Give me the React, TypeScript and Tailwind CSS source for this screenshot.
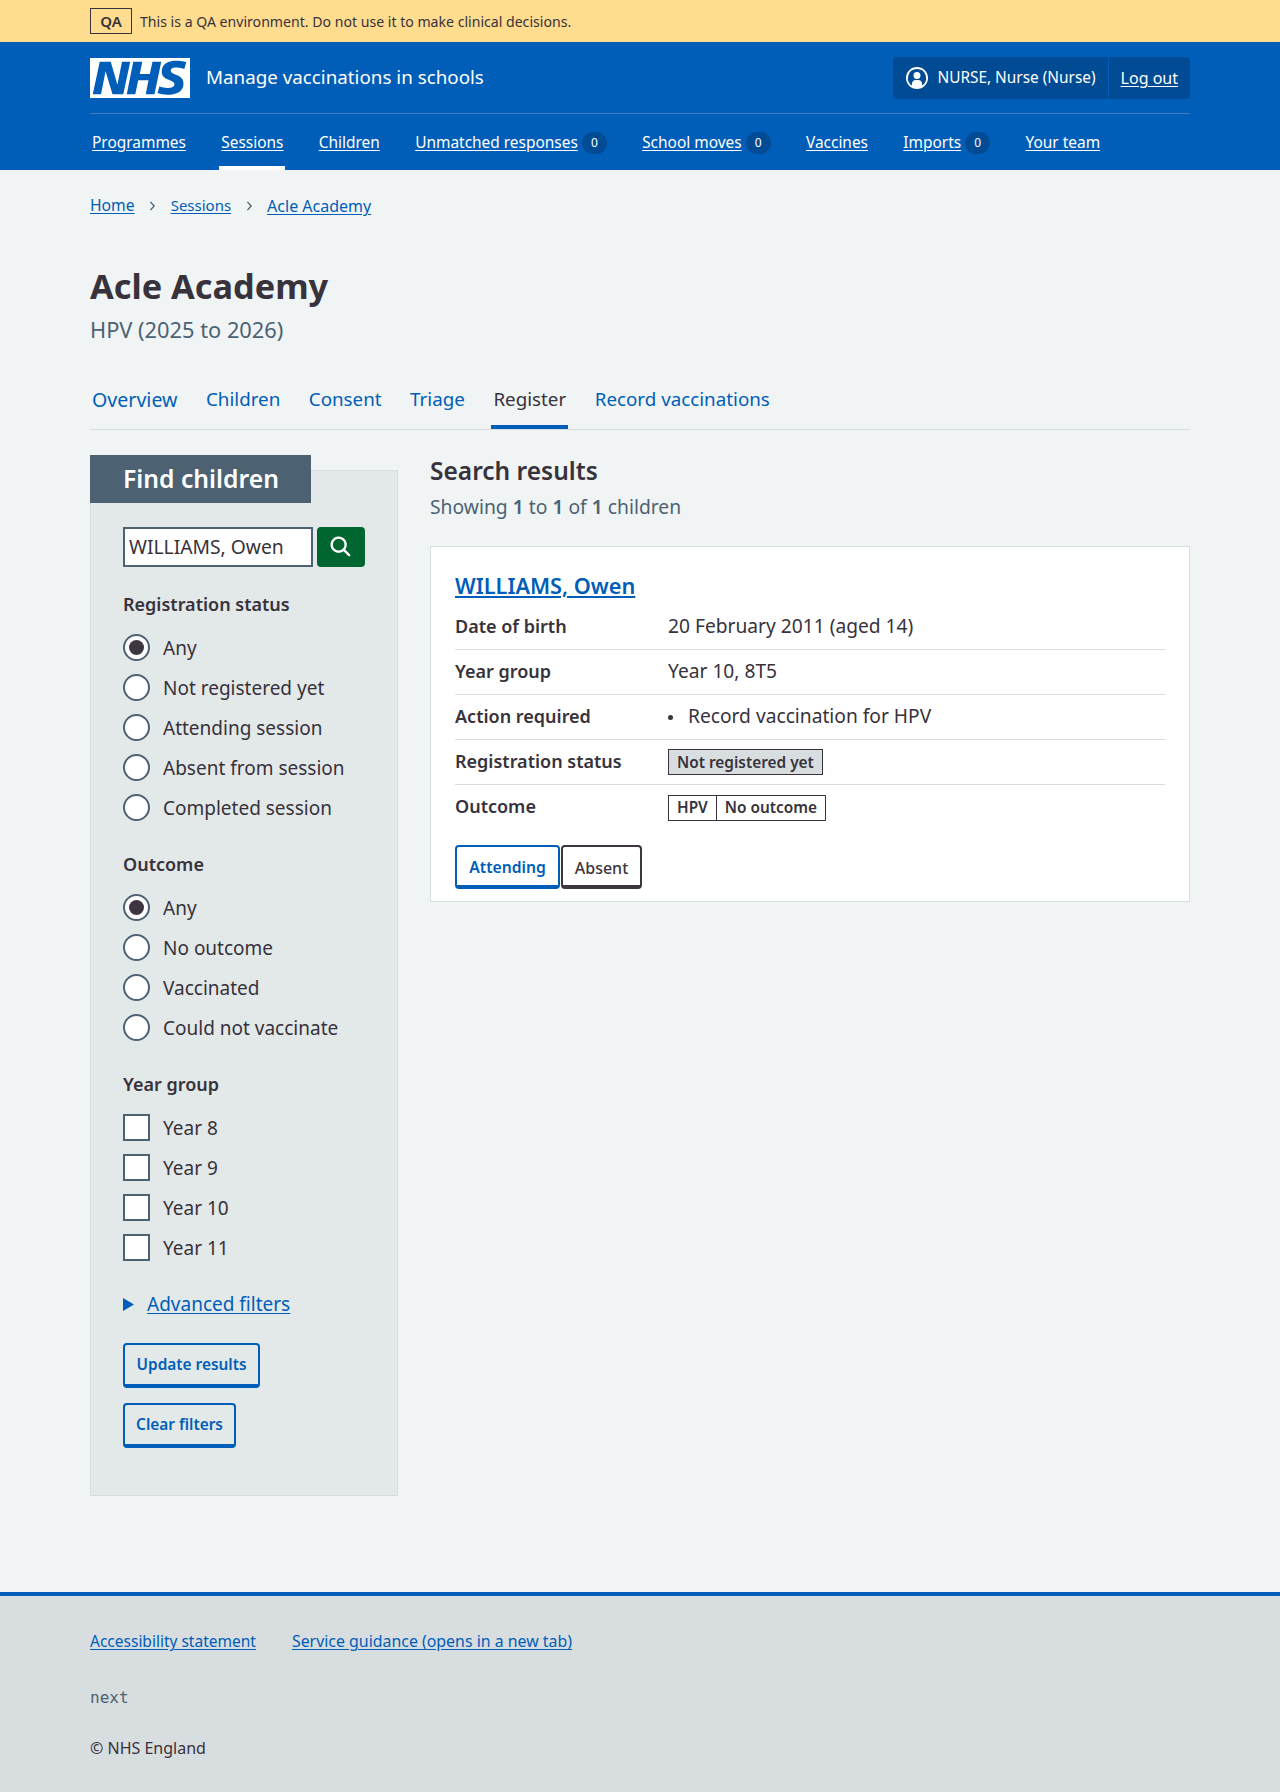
const FONT = "font-['Noto_Sans',sans-serif]";

function NhsLogo() {
  return (
    <svg viewBox="0 0 40 16" className="h-10 w-[100px]" aria-label="NHS">
      <path fill="#fff" d="M0 0h40v16H0z" />
      <path
        fill="#005eb8"
        d="M3.9 1.5h4.4l2.6 9h.1l1.8-9h3.3l-2.8 13H9l-2.7-9h-.1l-1.8 9H1.1M17.3 1.5h3.6l-1 4.9h4L25 1.5h3.5l-2.7 13h-3.5l1.1-5.6h-4.1l-1.2 5.6h-3.4M37.7 4.4c-.7-.3-1.6-.6-2.9-.6-1.4 0-2.5.2-2.5 1.3 0 1.8 5.1 1.2 5.1 5.1 0 3.6-3.3 4.5-6.4 4.5-1.3 0-2.9-.3-4-.7l.8-2.7c.7.4 2.1.7 3.2.7s2.8-.2 2.8-1.5c0-2.1-5.1-1.3-5.1-5 0-3.4 2.9-4.4 5.8-4.4 1.6 0 3.1.2 4 .6"
      />
    </svg>
  );
}

function NavLink({ label, count, active }: { label: string; count?: number; active?: boolean }) {
  return (
    <a
      className={`flex h-[56px] items-center gap-1 border-t-4 border-b-4 border-t-transparent px-0.5 pt-[1px] text-[15.45px] ${
        active ? "border-b-white" : "border-b-transparent"
      }`}
    >
      <span className="underline underline-offset-2">{label}</span>
      {count !== undefined && (
        <span className="flex h-[22px] w-[25px] items-center justify-center rounded-full bg-[#004b93] text-[12px]">
          {count}
        </span>
      )}
    </a>
  );
}

function Radio({ label, checked }: { label: string; checked?: boolean }) {
  return (
    <label className="flex h-10 items-center gap-[13px]">
      <span className="mb-[2px] flex h-[27px] w-[27px] items-center justify-center rounded-full border-2 border-[#4c6272] bg-white">
        {checked && <span className="h-[15px] w-[15px] rounded-full bg-[#3d3540]" />}
      </span>
      <span className="pt-[1px] text-[19px]">{label}</span>
    </label>
  );
}

function Checkbox({ label }: { label: string }) {
  return (
    <label className="flex h-10 items-center gap-[13px]">
      <span className="mb-[2px] h-[27px] w-[27px] border-2 border-[#4c6272] bg-white" />
      <span className="pt-[1px] text-[19px]">{label}</span>
    </label>
  );
}

function SecondaryButton({ label, width }: { label: string; width: string }) {
  return (
    <button className={`block h-[45px] rounded border-2 border-b-4 border-[#005eb8] text-[15.4px] font-semibold text-[#005eb8] ${width}`}>
      {label}
    </button>
  );
}

function Chevron() {
  return (
    <svg viewBox="0 0 8 12" className="h-[10px] w-[7px]" fill="none" stroke="#4c6272" strokeWidth="1.6">
      <path d="M1.5 1l4.5 5-4.5 5" />
    </svg>
  );
}

function Row({ term, children, last }: { term: string; children: React.ReactNode; last?: boolean }) {
  return (
    <div className={`flex h-[45px] items-center pb-[2px] ${last ? "" : "border-b border-[#d8dde0]"}`}>
      <dt className="w-[213px] text-[18px] font-semibold">{term}</dt>
      <dd className="text-[19.2px]">{children}</dd>
    </div>
  );
}

export default function App() {
  return (
    <div className={`${FONT} flex min-h-[1792px] flex-col bg-[#f0f4f5] text-[#37323b]`}>
      <div className="h-[42px] bg-[#ffdc8e]">
        <div className="mx-[90px] flex h-full items-center gap-2">
          <span className="flex h-[26px] w-[42px] items-center justify-center border border-[#37323b] text-[15px] font-semibold">
            QA
          </span>
          <span className="pt-[1px] text-[14.1px]">This is a QA environment. Do not use it to make clinical decisions.</span>
        </div>
      </div>

      <header className="h-[128px] bg-[#005eb8] text-white">
        <div className="mx-[90px]">
          <div className="flex h-[72px] items-center justify-between border-b border-[#3f7fc6]">
            <div className="flex items-center gap-4">
              <NhsLogo />
              <span className="text-[18.8px]">Manage vaccinations in schools</span>
            </div>
            <div className="flex h-[42px] items-center rounded bg-[#004b93] text-[15.4px]">
              <div className="flex h-full items-center gap-2 border-r border-[#005eb8] pr-3 pl-3">
                <svg viewBox="0 0 24 24" className="h-6 w-6" fill="currentColor">
                  <path d="M12 1a11 11 0 1 1 0 22 11 11 0 0 1 0-22Zm0 2a9 9 0 0 0-5 16.5V18a4 4 0 0 1 4-4h2a4 4 0 0 1 4 4v1.5A9 9 0 0 0 12 3Zm0 3a3.5 3.5 0 1 1-3.5 3.5A3.4 3.4 0 0 1 12 6Z" />
                </svg>
                <span>NURSE, Nurse (Nurse)</span>
              </div>
              <a className="px-3 text-[16px] underline underline-offset-2">Log out</a>
            </div>
          </div>
          <nav className="flex gap-[31.3px]">
            <NavLink label="Programmes" />
            <NavLink label="Sessions" active />
            <NavLink label="Children" />
            <NavLink label="Unmatched responses" count={0} />
            <NavLink label="School moves" count={0} />
            <NavLink label="Vaccines" />
            <NavLink label="Imports" count={0} />
            <NavLink label="Your team" />
          </nav>
        </div>
      </header>

      <main className="mx-[90px] flex-1">
        <div className="flex h-[72px] items-center gap-[14.5px] text-[15.7px] text-[#005eb8]">
          <a className="underline underline-offset-2">Home</a>
          <Chevron />
          <a className="mb-[2px] text-[15px] underline underline-offset-2">Sessions</a>
          <Chevron />
          <a className="text-[16px] underline underline-offset-2">Acle Academy</a>
        </div>

        <h1 className="mt-[19px] text-[34.3px] leading-[50px] font-bold">Acle Academy</h1>
        <p className="mt-[2px] text-[21.8px] leading-[34px] text-[#4c6272]">HPV (2025 to 2026)</p>

        <div className="mt-[27px] flex h-[56px] gap-[24.5px] border-b border-[#d8dde0] text-[18.8px] text-[#005eb8]">
          <a className="flex items-center border-b-4 border-transparent px-0.5 text-[19.6px]">Overview</a>
          <a className="flex items-center border-b-4 border-transparent px-0.5">Children</a>
          <a className="flex items-center border-b-4 border-transparent px-0.5">Consent</a>
          <a className="flex items-center border-b-4 border-transparent px-0.5">Triage</a>
          <a className="flex items-center border-b-4 border-[#005eb8] px-0.5 text-[#37323b]">Register</a>
          <a className="flex items-center border-b-4 border-transparent px-0.5">Record vaccinations</a>
        </div>

        <div className="mt-[25px] flex items-start gap-8">
          <aside className="mt-[15px] h-[1026px] w-[308px] border border-[#d8dde0] bg-[#e3e8e9]">
            <div className="mt-[-16px] ml-[-1px] flex h-[48px] w-[221px] items-center bg-[#4c6272] pl-[33px] text-[24.7px] font-semibold text-white">
              Find children
            </div>
            <div className="px-8">
              <div className="mt-6 flex gap-1">
                <div className="flex h-10 w-[190px] items-center border-2 border-[#4c6272] bg-white pl-1 text-[19.3px]">
                  WILLIAMS, Owen
                </div>
                <button className="flex h-10 w-[48px] items-center justify-center rounded bg-[#00662f]">
                  <svg viewBox="0 0 24 24" className="h-7 w-7" fill="#fff">
                    <path d="M19.71 18.29l-4.11-4.1a7 7 0 1 0-1.41 1.41l4.1 4.11a1 1 0 0 0 1.42 0 1 1 0 0 0 0-1.42zM5 10a5 5 0 1 1 5 5 5 5 0 0 1-5-5z" />
                  </svg>
                </button>
              </div>

              <h2 className="mt-[23px] text-[18px] leading-[28px] font-semibold">Registration status</h2>
              <div className="mt-[10px]">
                <Radio label="Any" checked />
                <Radio label="Not registered yet" />
                <Radio label="Attending session" />
                <Radio label="Absent from session" />
                <Radio label="Completed session" />
              </div>

              <h2 className="mt-[22px] text-[18px] leading-[28px] font-semibold">Outcome</h2>
              <div className="mt-[10px]">
                <Radio label="Any" checked />
                <Radio label="No outcome" />
                <Radio label="Vaccinated" />
                <Radio label="Could not vaccinate" />
              </div>

              <h2 className="mt-[22px] text-[18px] leading-[28px] font-semibold">Year group</h2>
              <div className="mt-[10px]">
                <Checkbox label="Year 8" />
                <Checkbox label="Year 9" />
                <Checkbox label="Year 10" />
                <Checkbox label="Year 11" />
              </div>

              <div className="mt-[22px] flex h-[28px] items-center gap-[13px] text-[19px] text-[#005eb8]">
                <svg viewBox="0 0 11 13" className="h-[13px] w-[11px]" fill="currentColor">
                  <path d="M0 0l11 6.5-11 6.5z" />
                </svg>
                <a className="underline underline-offset-2">Advanced filters</a>
              </div>

              <div className="mt-[25px] flex flex-col items-start gap-[15px]">
                <SecondaryButton label="Update results" width="w-[137px]" />
                <SecondaryButton label="Clear filters" width="w-[113px]" />
              </div>
            </div>
          </aside>

          <section className="min-w-0 flex-1">
            <h2 className="text-[24.5px] leading-[32px] font-semibold">Search results</h2>
            <p className="mt-[6px] text-[19.3px] leading-[28px] text-[#4c6272]">
              Showing <b className="font-semibold">1</b> to <b className="font-semibold">1</b> of{" "}
              <b className="font-semibold">1</b> children
            </p>

            <div className="mt-[25px] h-[356px] border border-[#d8dde0] bg-white px-6 pt-[24px]">
              <a className="block text-[21.7px] leading-[30px] font-semibold text-[#005eb8] underline underline-offset-2">
                WILLIAMS, Owen
              </a>
              <dl className="mt-[4px]">
                <Row term="Date of birth">20 February 2011 (aged 14)</Row>
                <Row term="Year group">Year 10, 8T5</Row>
                <Row term="Action required">
                  <span className="mr-[15px] inline-block h-[5px] w-[5px] translate-y-[-3px] rounded-full bg-[#37323b]" />
                  Record vaccination for HPV
                </Row>
                <Row term="Registration status">
                  <span className="inline-flex h-[26px] items-center border border-[#37323b] bg-[#d8dde0] px-2 text-[15.4px] font-semibold">
                    Not registered yet
                  </span>
                </Row>
                <Row term="Outcome" last>
                  <span className="inline-flex h-[26px] items-center border border-[#37323b] text-[15.4px] font-semibold">
                    <span className="border-r border-[#37323b] px-2 leading-[24px]">HPV</span>
                    <span className="px-2 leading-[24px]">No outcome</span>
                  </span>
                </Row>
              </dl>
              <div className="mt-[15px] flex">
                <button className="h-[44px] w-[105px] rounded border-2 border-b-4 border-[#005eb8] pt-[4px] text-[15.7px] font-semibold text-[#005eb8]">
                  Attending
                </button>
                <button className="ml-px h-[44px] w-[81px] rounded border-2 border-b-4 border-[#3d3540] pt-[3px] text-[16px] font-medium text-[#3d3540]">
                  Absent
                </button>
              </div>
            </div>
          </section>
        </div>
      </main>

      <footer className="h-[200px] border-t-4 border-[#005eb8] bg-[#d8dde0]">
        <div className="mx-[90px] pt-[32px]">
          <div className="flex h-[28px] items-center gap-9 text-[15.5px] text-[#005eb8]">
            <a className="underline underline-offset-2">Accessibility statement</a>
            <a className="text-[15.9px] underline underline-offset-2">Service guidance (opens in a new tab)</a>
          </div>
          <p className="mt-[28px] font-['DejaVu_Sans_Mono',monospace] text-[16px] leading-[28px] text-[#4c6272]">next</p>
          <p className="mt-[22px] text-[16px] leading-[28px]">© NHS England</p>
        </div>
      </footer>
    </div>
  );
}
